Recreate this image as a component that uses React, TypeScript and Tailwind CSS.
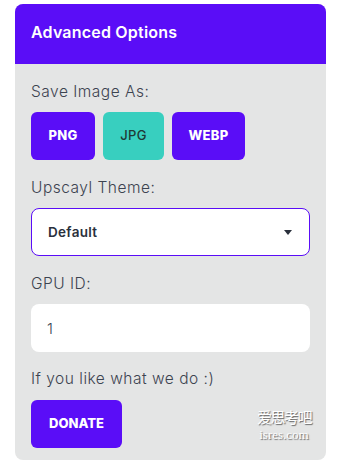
import React, { useState } from 'react';

const App: React.FC = () => {
  const [format, setFormat] = useState('jpg');
  const [gpuId, setGpuId] = useState('1');

  const fmtBtn = (key: string, label: string, w: string) => (
    <button
      key={key}
      onClick={() => setFormat(key)}
      className={`${w} h-12 rounded-md text-[13px] tracking-[0.3px] ${
        format === key ? 'bg-[#38cfbf] text-[#1f3a36] font-medium' : 'bg-[#5a0df7] text-white font-extrabold'
      }`}
    >
      {label}
    </button>
  );

  return (
    <div className="w-[345px] h-[461px] bg-white pt-1 pl-[15px] font-['Inter',sans-serif]">
      <div className="w-[311px] h-[456px] rounded-lg bg-[#e4e5e5] overflow-hidden">
        <div className="h-[60px] bg-[#5a0df7] px-4 pb-[5px] flex items-center">
          <h2 className="text-white text-[16px] font-semibold tracking-[0.2px]">Advanced Options</h2>
        </div>
        <div className="px-4 pt-[18px] text-[#3c4350]">
          <p className="text-[15.5px] leading-5 tracking-[0.5px] font-light">Save Image As:</p>
          <div className="flex gap-2 mt-[10px]">
            {fmtBtn('png', 'PNG', 'w-16')}
            {fmtBtn('jpg', 'JPG', 'w-[61px]')}
            {fmtBtn('webp', 'WEBP', 'w-[73px]')}
          </div>
          <p className="text-[15.5px] leading-5 tracking-[0.5px] font-light mt-[18px]">Upscayl Theme:</p>
          <div className="mt-[10px] h-12 w-[279px] bg-white border border-[#5a0df7] rounded-lg flex items-center justify-between pl-4 pr-[17px]">
            <span className="text-[13.5px] font-semibold tracking-[0.3px] text-[#2a303c]">Default</span>
            <svg width="8" height="5" viewBox="0 0 8 5"><path d="M0 0h8L4 5z" fill="#2a303c" /></svg>
          </div>
          <p className="text-[15.5px] leading-5 tracking-[0.5px] font-light mt-[18px]">GPU ID:</p>
          <input
            value={gpuId}
            onChange={e => setGpuId(e.target.value)}
            className="mt-[10px] h-12 w-[279px] bg-white rounded-lg px-4 text-[15px] font-light text-[#3c4350] outline-none"
          />
          <p className="text-[15.5px] leading-5 tracking-[0.5px] font-light mt-[17px]">If you like what we do :)</p>
          <div className="flex items-start justify-between mt-[11px]">
            <button className="w-[91px] h-12 rounded-md bg-[#5a0df7] text-white text-[13px] font-extrabold">DONATE</button>
            <div className="mt-[8px] -mr-[1px] flex flex-col items-center gap-[3px] text-white [text-shadow:1px_1px_1px_#666]">
              <span className="block text-[15px] leading-[17px] tracking-[-1.5px] font-['Noto_Sans_CJK_SC',serif]">爱思考吧</span>
              <span className="block text-[13px] leading-[13px] font-['Liberation_Serif',serif]">isres.com</span>
            </div>
          </div>
        </div>
      </div>
    </div>
  );
};

export default App;
